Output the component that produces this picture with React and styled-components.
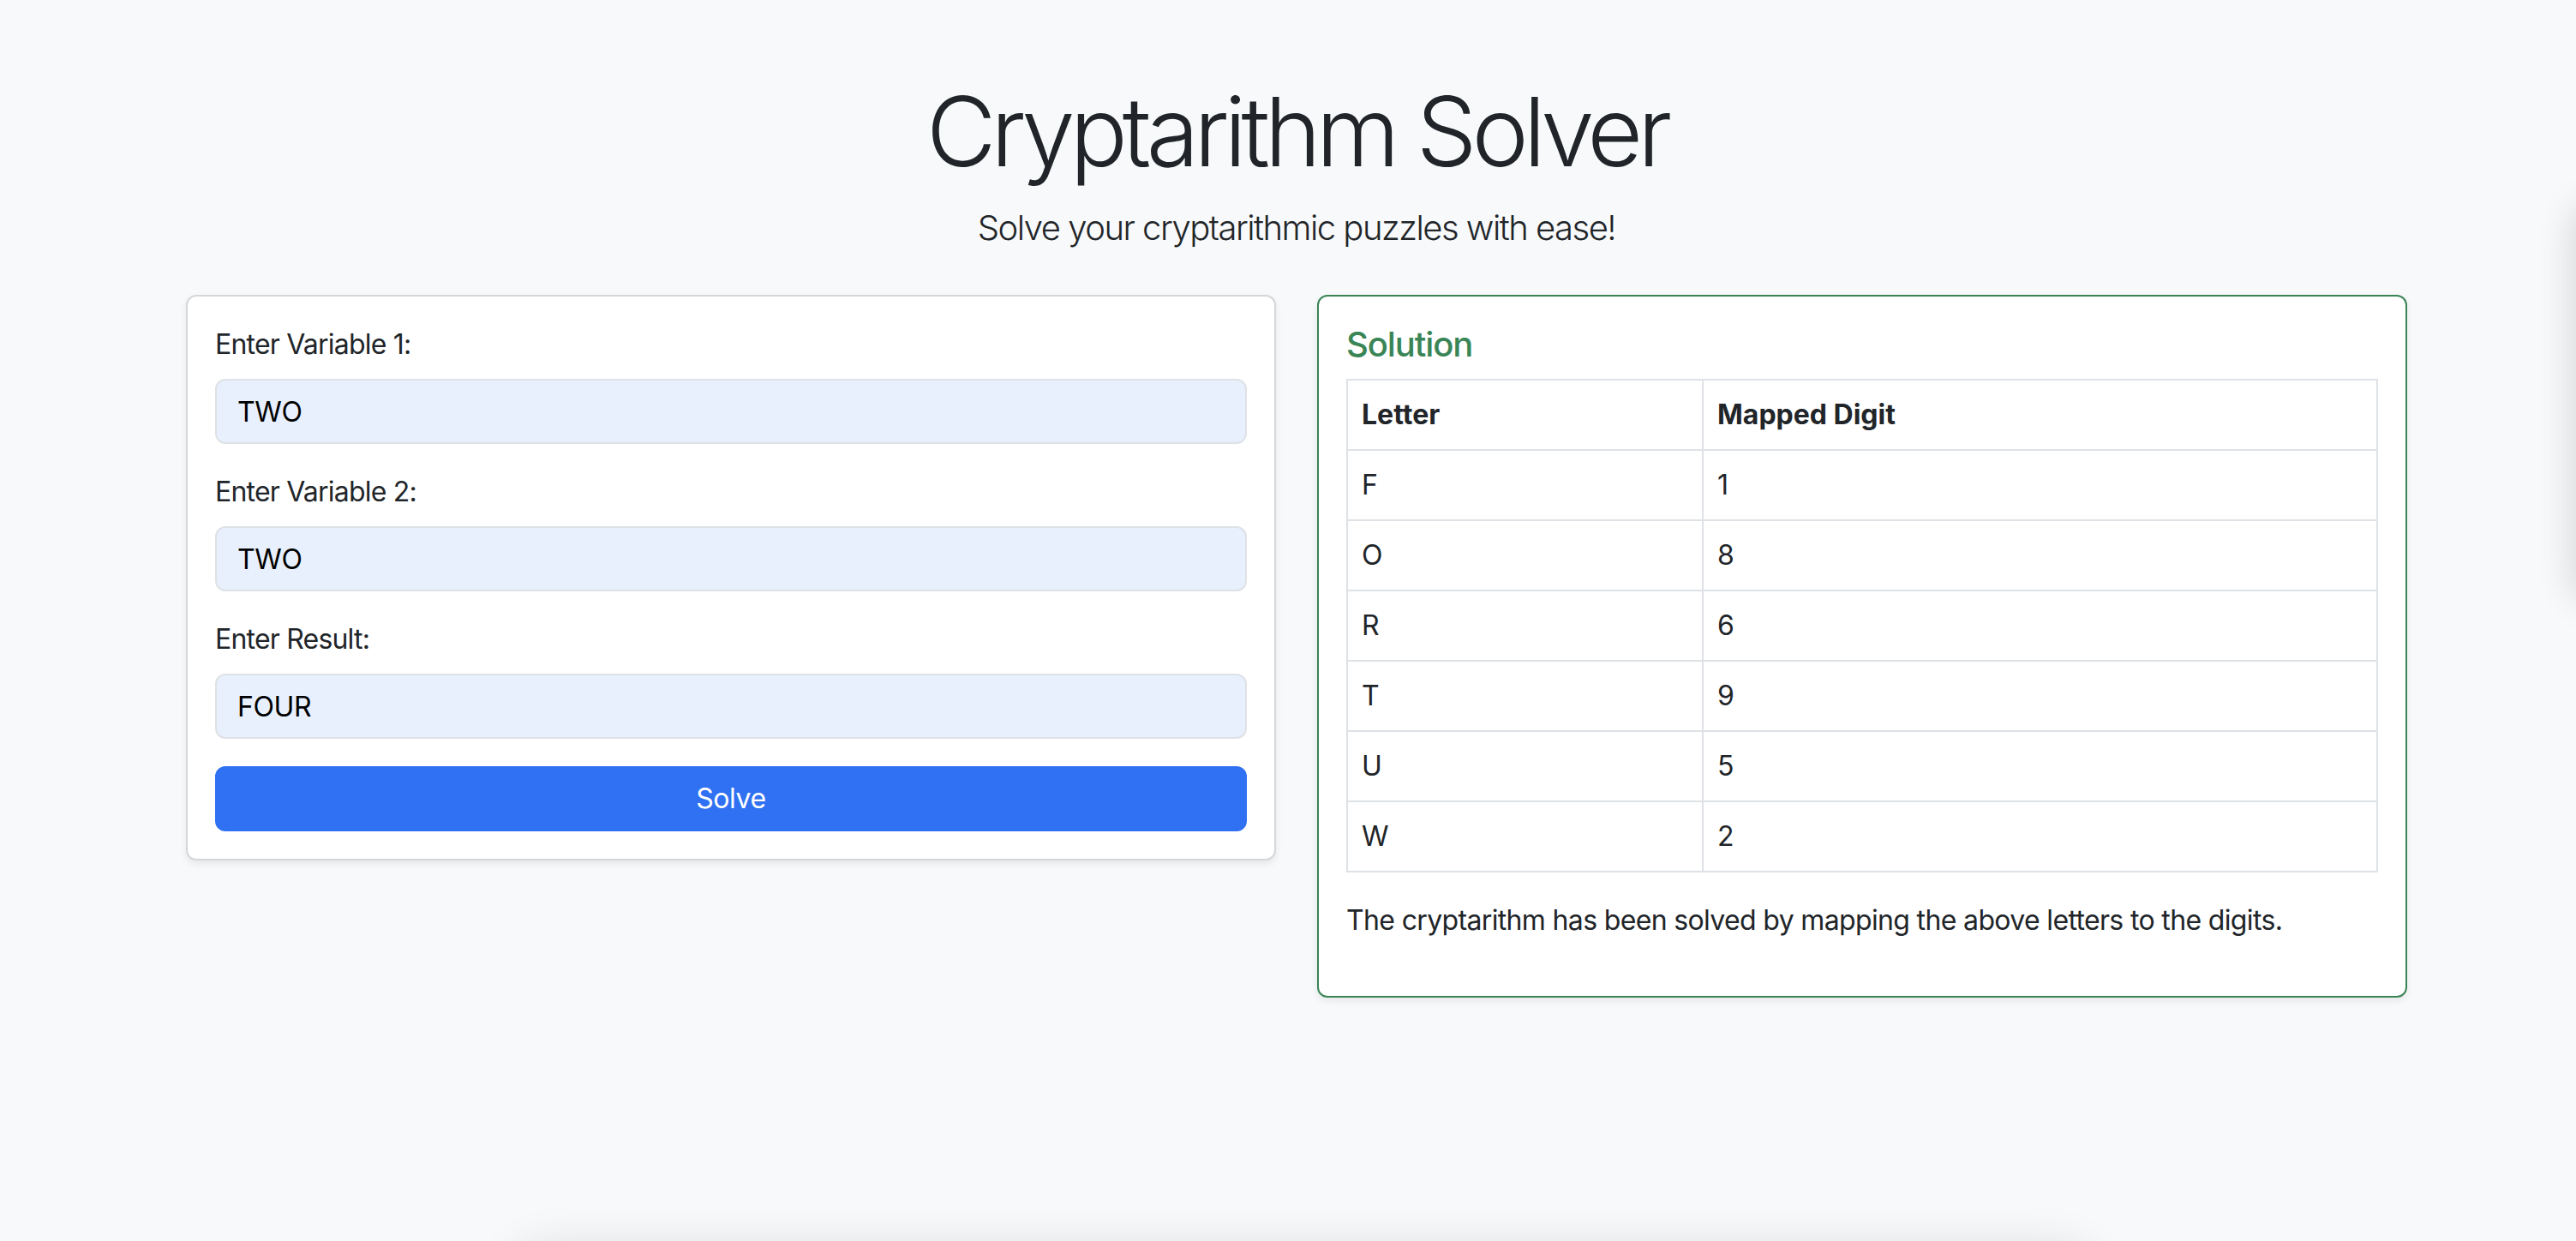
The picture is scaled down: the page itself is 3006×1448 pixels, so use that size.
import styled, { createGlobalStyle } from 'styled-components';

const GlobalStyle = createGlobalStyle`
  html, body {
    margin: 0;
    background: #f8f9fa;
  }
  body {
    font-family: Inter, "Noto Sans", "Liberation Sans", sans-serif;
    color: #212529;
    -webkit-font-smoothing: antialiased;
  }
  * {
    box-sizing: border-box;
  }
`;

const Page = styled.div`
  min-height: 1448px;
  padding: 86px 0 0 20px;
`;

const Container = styled.main`
  max-width: 2592px;
  margin: 0 auto;
`;

const Title = styled.h1`
  margin: 0 0 16px;
  font-size: 112px;
  font-weight: 300;
  line-height: 1.2;
  letter-spacing: -6.1px;
  text-align: center;
`;

const Lead = styled.p`
  margin: 0 0 48px;
  font-size: 40px;
  font-weight: 300;
  line-height: 1.5;
  letter-spacing: -1.5px;
  text-align: center;
`;

const Columns = styled.div`
  display: grid;
  grid-template-columns: 1fr 1fr;
  gap: 48px;
  align-items: start;
`;

const Card = styled.section`
  background: #fff;
  border: 2px solid ${(p) => (p.$success ? '#3a8556' : '#d5d7d9')};
  border-radius: 12px;
  box-shadow: 0 4px 8px rgba(0, 0, 0, 0.075);
  padding: 32px;
`;

const Field = styled.div`
  margin-bottom: 32px;
`;

const Label = styled.label`
  display: block;
  margin-bottom: 16px;
  font-size: 32px;
  line-height: 48px;
  letter-spacing: -0.8px;
`;

const Input = styled.input`
  display: block;
  width: 100%;
  height: 76px;
  padding: 12px 24px;
  font: inherit;
  font-size: 32px;
  line-height: 48px;
  letter-spacing: -0.4px;
  color: #000;
  background: #e8f0fe;
  border: 2px solid #dee2e6;
  border-radius: 12px;
  outline: none;
`;

const SolveButton = styled.button`
  display: block;
  width: 100%;
  height: 76px;
  font: inherit;
  font-size: 32px;
  line-height: 48px;
  letter-spacing: -0.4px;
  color: #fff;
  background: #2f71f2;
  border: 2px solid #2f71f2;
  border-radius: 12px;
  cursor: pointer;
`;

const CardTitle = styled.h5`
  margin: 0 0 16px;
  font-size: 40px;
  font-weight: 500;
  line-height: 48px;
  letter-spacing: -1.1px;
  color: #3a8556;
`;

const Table = styled.table`
  width: 100%;
  border-collapse: collapse;
  margin-bottom: 32px;
  font-size: 32px;
  line-height: 48px;
`;

const Cell = styled.td`
  padding: 16px;
  border: 2px solid #dee2e6;
  text-align: left;
  font-weight: 400;
  width: ${(p) => p.$width || 'auto'};
`;

const HeadCell = styled(Cell).attrs({ as: 'th' })`
  font-weight: 700;
`;

const Note = styled.p`
  margin: 0 0 32px;
  font-size: 32px;
  line-height: 48px;
  letter-spacing: -0.65px;
`;

const EdgeShadow = styled.div`
  position: fixed;
  pointer-events: none;
  background: #f8f9fa;
  ${(p) =>
    p.$side === 'right'
      ? `
    left: 100%;
    top: 240px;
    width: 400px;
    height: 460px;
    border-radius: 30px;
    box-shadow: 0 0 40px 6px rgba(0, 0, 0, 0.13);
  `
      : `
    top: calc(100% + 12px);
    left: 600px;
    width: 1840px;
    height: 300px;
    border-radius: 40px;
    box-shadow: 0 0 50px 8px rgba(0, 0, 0, 0.1);
  `}
`;

const fields = [
  { id: 'var1', label: 'Enter Variable 1:', value: 'TWO' },
  { id: 'var2', label: 'Enter Variable 2:', value: 'TWO' },
  { id: 'result', label: 'Enter Result:', value: 'FOUR' },
];

const mapping = [
  ['F', 1],
  ['O', 8],
  ['R', 6],
  ['T', 9],
  ['U', 5],
  ['W', 2],
];

export default function App() {
  return (
    <Page>
      <GlobalStyle />
      <Container>
        <Title>Cryptarithm Solver</Title>
        <Lead>Solve your cryptarithmic puzzles with ease!</Lead>
        <Columns>
          <Card>
            <form onSubmit={(e) => e.preventDefault()}>
              {fields.map((f) => (
                <Field key={f.id}>
                  <Label htmlFor={f.id}>{f.label}</Label>
                  <Input id={f.id} defaultValue={f.value} />
                </Field>
              ))}
              <SolveButton type="submit">Solve</SolveButton>
            </form>
          </Card>
          <Card $success>
            <CardTitle>Solution</CardTitle>
            <Table>
              <thead>
                <tr>
                  <HeadCell $width="415px">Letter</HeadCell>
                  <HeadCell>Mapped Digit</HeadCell>
                </tr>
              </thead>
              <tbody>
                {mapping.map(([letter, digit]) => (
                  <tr key={letter}>
                    <Cell>{letter}</Cell>
                    <Cell>{digit}</Cell>
                  </tr>
                ))}
              </tbody>
            </Table>
            <Note>The cryptarithm has been solved by mapping the above letters to the digits.</Note>
          </Card>
        </Columns>
      </Container>
      <EdgeShadow $side="right" />
      <EdgeShadow $side="bottom" />
    </Page>
  );
}
